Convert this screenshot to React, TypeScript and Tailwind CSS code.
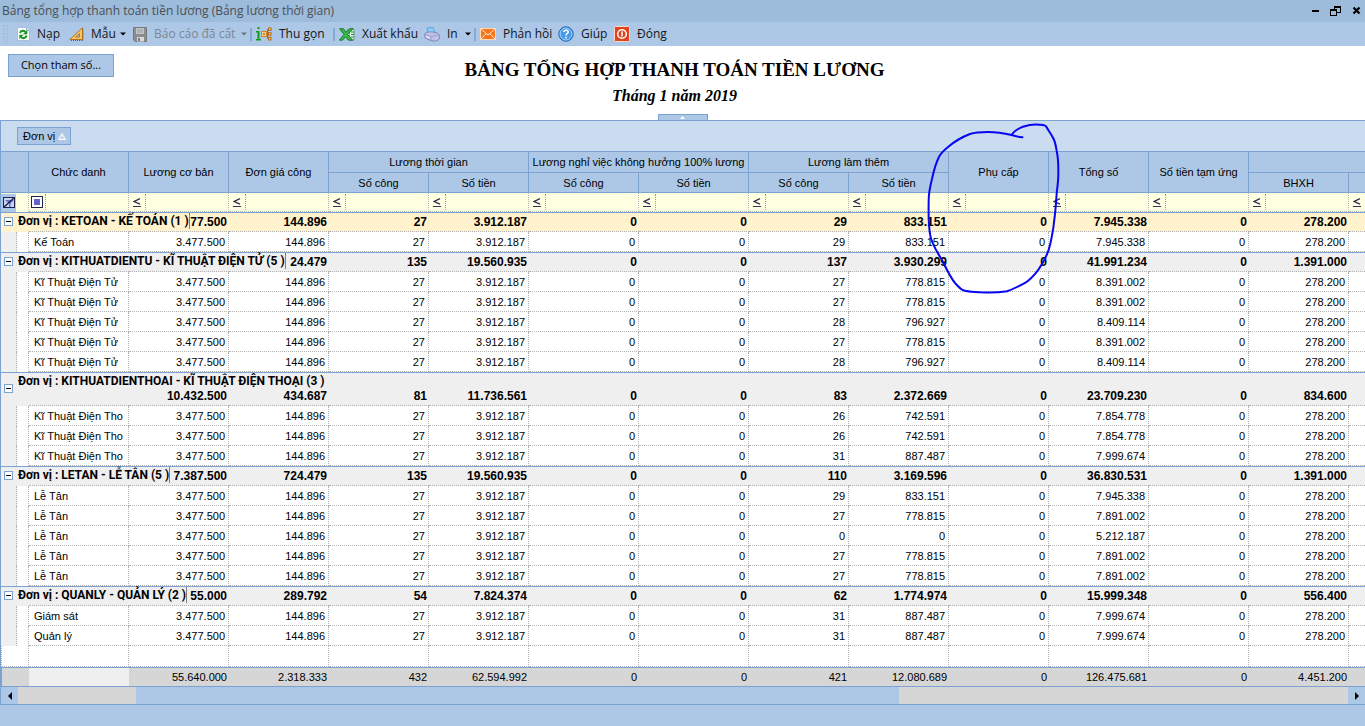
// Bảng tổng hợp thanh toán tiền lương — payroll summary grid
import { useState } from "react";
import type { ReactNode } from "react";

interface PayRow {
  title: string;
  values: string[];
}

interface PayGroup {
  id: string;
  label: string;
  totals: string[];
  rows: PayRow[];
  selected?: boolean;
  tall?: boolean;
}

const LEAF_COLUMNS = [
  "Lương cơ bản",
  "Đơn giá công",
  "Lương thời gian - Số công",
  "Lương thời gian - Số tiền",
  "Nghỉ việc - Số công",
  "Nghỉ việc - Số tiền",
  "Lương làm thêm - Số công",
  "Lương làm thêm - Số tiền",
  "Phụ cấp",
  "Tổng số",
  "Số tiền tạm ứng",
  "BHXH",
  "BHYT",
];

function row(title: string, otDays: string, otPay: string, total: string): PayRow {
  return {
    title,
    values: ["3.477.500", "144.896", "27", "3.912.187", "0", "0", otDays, otPay, "0", total, "0", "278.200", ""],
  };
}

// the group label runs over the first totals, so only their visible digits are kept
const GROUPS: PayGroup[] = [
  {
    id: "KETOAN",
    label: "Đơn vị : KETOAN - KẾ TOÁN (1 )",
    selected: true,
    totals: ["77.500", "144.896", "27", "3.912.187", "0", "0", "29", "833.151", "0", "7.945.338", "0", "278.200", ""],
    rows: [row("Kế Toán", "29", "833.151", "7.945.338")],
  },
  {
    id: "KITHUATDIENTU",
    label: "Đơn vị : KITHUATDIENTU - KĨ THUẬT ĐIỆN TỬ (5 )",
    totals: ["", "24.479", "135", "19.560.935", "0", "0", "137", "3.930.299", "0", "41.991.234", "0", "1.391.000", ""],
    rows: [
      row("Kĩ Thuật Điện Tử", "27", "778.815", "8.391.002"),
      row("Kĩ Thuật Điện Tử", "27", "778.815", "8.391.002"),
      row("Kĩ Thuật Điện Tử", "28", "796.927", "8.409.114"),
      row("Kĩ Thuật Điện Tử", "27", "778.815", "8.391.002"),
      row("Kĩ Thuật Điện Tử", "28", "796.927", "8.409.114"),
    ],
  },
  {
    id: "KITHUATDIENTHOAI",
    label: "Đơn vị : KITHUATDIENTHOAI - KĨ THUẬT ĐIỆN THOẠI (3 )",
    tall: true,
    totals: ["10.432.500", "434.687", "81", "11.736.561", "0", "0", "83", "2.372.669", "0", "23.709.230", "0", "834.600", ""],
    rows: [
      row("Kĩ Thuật Điện Tho", "26", "742.591", "7.854.778"),
      row("Kĩ Thuật Điện Tho", "26", "742.591", "7.854.778"),
      row("Kĩ Thuật Điện Tho", "31", "887.487", "7.999.674"),
    ],
  },
  {
    id: "LETAN",
    label: "Đơn vị : LETAN - LỄ TÂN (5 )",
    totals: ["7.387.500", "724.479", "135", "19.560.935", "0", "0", "110", "3.169.596", "0", "36.830.531", "0", "1.391.000", ""],
    rows: [
      row("Lễ Tân", "29", "833.151", "7.945.338"),
      row("Lễ Tân", "27", "778.815", "7.891.002"),
      row("Lễ Tân", "0", "0", "5.212.187"),
      row("Lễ Tân", "27", "778.815", "7.891.002"),
      row("Lễ Tân", "27", "778.815", "7.891.002"),
    ],
  },
  {
    id: "QUANLY",
    label: "Đơn vị : QUANLY - QUẢN LÝ (2 )",
    totals: ["55.000", "289.792", "54", "7.824.374", "0", "0", "62", "1.774.974", "0", "15.999.348", "0", "556.400", ""],
    rows: [
      row("Giám sát", "31", "887.487", "7.999.674"),
      row("Quản lý", "31", "887.487", "7.999.674"),
    ],
  },
];

const GRAND_TOTALS = ["55.640.000", "2.318.333", "432", "62.594.992", "0", "0", "421", "12.080.689", "0", "126.475.681", "0", "4.451.200", ""];

export default function App() {
  const [closed, setClosed] = useState<string[]>([]);

  function toggle(id: string) {
    setClosed(closed.includes(id) ? closed.filter((c) => c !== id) : [...closed, id]);
  }

  return (
    <div className="relative min-h-screen overflow-hidden bg-[#adc8e6] font-['Liberation_Sans',sans-serif] text-[11px] text-black">
      <TitleBar />
      <Toolbar />

      <header className="grid grid-cols-[106px_1fr_106px] bg-white pl-2 pr-6 pt-2">
        <button className="h-[23px] border border-[#7ba2d1] bg-[#adc8e6] font-['Open_Sans','Noto_Sans',sans-serif] text-[11px]">
          Chọn tham số...
        </button>
        <div className="pb-1 text-center font-['Liberation_Serif',serif] font-bold">
          <h1 className="pt-0.5 text-[19px] leading-7">BẢNG TỔNG HỢP THANH TOÁN TIỀN LƯƠNG</h1>
          <p className="text-base leading-6 italic">Tháng 1 năm 2019</p>
        </div>
      </header>
      <div className="flex justify-center bg-white pt-0.5">
        <button aria-label="Thu gọn tiêu đề" className="flex h-1.5 w-[50px] items-center justify-center border border-b-0 border-[#7ba2d1] bg-[#adc8e6]">
          <svg width="5" height="3" viewBox="0 0 5 3"><path d="M2.5 0 5 3H0z" fill="#fff" /></svg>
        </button>
      </div>

      <main className="overflow-hidden border-y border-l border-[#7ba2d1]">
        <div className="flex h-[30px] items-center bg-[#cbdbf0] pl-4">
          <button className="flex h-[18px] items-center gap-[3px] border border-[#7ba2d1] bg-[#adc8e6] pl-[5px] pr-1">
            Đơn vị
            <svg width="8" height="7" viewBox="0 0 8 7"><path d="M4 .5 7.5 6.5H.5z" fill="#c5d8ee" stroke="#fff" /></svg>
          </button>
        </div>

        <table className="w-full min-w-[1448px] table-fixed border-separate border-spacing-0 bg-white leading-[18px]">
          <colgroup>
            <col className="w-7" />
            <col className="w-[100px]" />
            {LEAF_COLUMNS.map((c) => (
              <col key={c} className={c.startsWith("Nghỉ việc") ? "w-[110px]" : "w-[100px]"} />
            ))}
          </colgroup>
          <thead>
            <tr className="h-[21px]">
              <Head rowSpan={2} />
              <Head rowSpan={2}>Chức danh</Head>
              <Head rowSpan={2}>Lương cơ bản</Head>
              <Head rowSpan={2}>Đơn giá công</Head>
              <Head colSpan={2}>Lương thời gian</Head>
              <Head colSpan={2}>Lương nghỉ việc không hưởng 100% lương</Head>
              <Head colSpan={2}>Lương làm thêm</Head>
              <Head rowSpan={2}>Phụ cấp</Head>
              <Head rowSpan={2}>Tổng số</Head>
              <Head rowSpan={2}>Số tiền tạm ứng</Head>
              <Head colSpan={2} />
            </tr>
            <tr className="h-5">
              <Head>Số công</Head>
              <Head>Số tiền</Head>
              <Head>Số công</Head>
              <Head>Số tiền</Head>
              <Head>Số công</Head>
              <Head>Số tiền</Head>
              <Head>BHXH</Head>
              <Head />
            </tr>
            <FilterRow />
          </thead>
          <tbody>
            {GROUPS.map((g) => (
              <GroupRows key={g.id} group={g} open={!closed.includes(g.id)} onToggle={() => toggle(g.id)} />
            ))}
            <tr className="h-[21px]">
              <td className="border-b border-l border-r border-dotted border-[#b4b4b4]" />
              <td className="border-b border-r border-dotted border-[#b4b4b4]" />
              {LEAF_COLUMNS.map((c) => <td key={c} className="border-b border-r border-dotted border-[#b4b4b4]" />)}
            </tr>
          </tbody>
          <tfoot>
            <tr className="h-[19px] bg-[#d6d6d6]">
              <td className="border-l border-t border-[#7ba2d1] p-0" />
              <td className="border-t border-[#7ba2d1] bg-[#efefef] p-0" />
              {GRAND_TOTALS.map((v, i) => (
                <td key={i} className="border-t border-[#7ba2d1] p-0 pr-0.5 text-right">{v}</td>
              ))}
            </tr>
          </tfoot>
        </table>

        <div className="flex h-[18px] border-t border-[#7ba2d1] bg-[#d6d6d6]">
          <button aria-label="Cuộn trái" className="flex w-[17px] items-center justify-center bg-[#adc8e6]">
            <svg width="4" height="8" viewBox="0 0 4 8"><path d="M4 0v8L0 4z" /></svg>
          </button>
          <div className="flex-[118]" />
          <div className="flex-[763] bg-[#adc8e6]" />
          <div className="flex-[449]" />
          <button aria-label="Cuộn phải" className="flex w-[17px] items-center justify-center bg-[#adc8e6]">
            <svg width="4" height="8" viewBox="0 0 4 8"><path d="M0 0v8l4-4z" /></svg>
          </button>
        </div>
      </main>

      <PenCircle />
    </div>
  );
}

function TitleBar() {
  return (
    <div className="flex h-[22px] items-center justify-between bg-[#9dbbda] pl-0.5 pr-1">
      <span className="font-['Open_Sans','Noto_Sans',sans-serif] text-[12px] text-[#4a4f57]">
        Bảng tổng hợp thanh toán tiền lương (Bảng lương thời gian)
      </span>
      <div className="flex items-center gap-2.5">
        <button aria-label="Thu nhỏ">
          <svg width="9" height="10" viewBox="0 0 9 10"><path d="M1 4h7v2H1z" /></svg>
        </button>
        <button aria-label="Khôi phục">
          <svg width="12" height="10" viewBox="0 0 12 10" shapeRendering="crispEdges">
            <path d="M4 0h7v2H4zM4 2h1v1H4zM10 2h1v5H10zM7 6h3v1H7z" />
            <path d="M0 3h7v2H0zM0 5h1v5H0zM6 5h1v5H6zM1 9h5v1H1z" />
          </svg>
        </button>
        <button aria-label="Đóng cửa sổ">
          <svg width="9" height="10" viewBox="0 0 9 10"><path d="M1.500 1.500 7.500 7.500M7.500 1.500 1.500 7.500" stroke="#000" strokeWidth="2.200" /></svg>
        </button>
      </div>
    </div>
  );
}

function Toolbar() {
  return (
    <nav className="flex h-6 items-center whitespace-nowrap bg-[#adc8e6] pl-[3px] font-['Open_Sans','Noto_Sans',sans-serif] text-[12px] text-[#141420]">
      <svg width="5" height="20" viewBox="0 0 5 20" fill="#8fa9c9">
        {[1, 5, 9, 13, 17].map((y) => (
          <g key={y}>
            <path d={`M0 ${y}h1v1H0zM3 ${y}h1v1H3z`} />
            <path d={`M1 ${y + 2}h1v1H1zM4 ${y + 2}h1v1H4z`} fill="#9db6d4" />
          </g>
        ))}
      </svg>
      <ToolButton className="w-[57px]" icon={<ReloadIcon />} label="Nạp" />
      <ToolButton className="w-[64px]" icon={<RulerIcon />} label="Mẫu" menu />
      <ToolButton className="w-[121px] text-[#7d8794]" icon={<SaveIcon />} label="Báo cáo đã cất" menu disabled />
      <Separator />
      <ToolButton className="w-[81px]" icon={<TreeIcon />} label="Thu gọn" />
      <Separator />
      <ToolButton className="w-[85px]" icon={<ExcelIcon />} label="Xuất khẩu" />
      <ToolButton className="w-[54px]" icon={<PrinterIcon />} label="In" menu />
      <Separator />
      <ToolButton className="w-[78px]" icon={<MailIcon />} label="Phản hồi" />
      <ToolButton className="w-[56px]" icon={<HelpIcon />} label="Giúp" />
      <ToolButton className="w-[60px]" icon={<PowerIcon />} label="Đóng" />
    </nav>
  );
}

function Separator() {
  return <span className="h-[13px] w-0.5 bg-[#86aad6]" />;
}

function ToolButton({
  icon,
  label,
  menu,
  disabled,
  className,
}: {
  icon: ReactNode;
  label: string;
  menu?: boolean;
  disabled?: boolean;
  className: string;
}) {
  return (
    <button disabled={disabled} className={`flex h-6 shrink-0 items-center pl-1 ${className}`}>
      {icon}
      <span className="pl-[7px]">{label}</span>
      {menu && (
        <svg className="ml-auto mr-[3px]" width="6" height="4" viewBox="0 0 6 4">
          <path d="M0 .5h6L3 3.500z" fill={disabled ? "#6b7480" : "#000"} />
        </svg>
      )}
    </button>
  );
}

function Head({ children, rowSpan, colSpan }: { children?: ReactNode; rowSpan?: number; colSpan?: number }) {
  return (
    <th
      rowSpan={rowSpan}
      colSpan={colSpan}
      className="whitespace-nowrap border-r border-t border-[#7ba2d1] bg-[#adc8e6] p-0 text-center align-middle font-normal"
    >
      {children}
    </th>
  );
}

function FilterRow() {
  return (
    <tr className="h-5 bg-[#ffffe1]">
      <td className="border-r border-t border-[#7ba2d1] border-r-[#b4b4b4] p-0 [border-right-style:dotted]">
        <button aria-label="Xóa bộ lọc" className="flex h-[18px] w-[15px] items-center bg-[#adc8e6] pl-0.5">
          <svg width="13" height="13" viewBox="0 0 13 13">
            <rect x=".5" y="1.500" width="11" height="10" fill="#c9d6f2" stroke="#22224e" />
            <path d="M2 4h9L7.500 7.500V11H6V7.500z" fill="#6b74c8" />
            <path d="M1 11 11.500 1.500" stroke="#22224e" strokeWidth="1.500" />
          </svg>
        </button>
      </td>
      <td className="border-b border-r border-t border-dotted border-[#b4b4b4] border-t-[#7ba2d1] p-0 [border-top-style:solid]">
        <FilterCell label="Chức danh">
          <svg width="12" height="12" viewBox="0 0 12 12" shapeRendering="crispEdges">
            <rect x=".5" y=".5" width="11" height="11" fill="#fff" stroke="#22224e" />
            <rect x="3" y="3" width="6" height="6" fill="#6464cd" />
          </svg>
        </FilterCell>
      </td>
      {LEAF_COLUMNS.map((c) => (
        <td key={c} className="border-b border-r border-t border-dotted border-[#b4b4b4] border-t-[#7ba2d1] p-0 [border-top-style:solid]">
          <FilterCell label={c}>
            <svg width="8" height="9" viewBox="0 0 8 9" fill="none" stroke="#30305c">
              <path d="M7 .7 1.200 3.500 7 6.200" strokeWidth="1.300" />
              <path d="M0 8.500h8" />
            </svg>
          </FilterCell>
        </td>
      ))}
    </tr>
  );
}

function FilterCell({ label, children }: { label: string; children: ReactNode }) {
  return (
    <div className="flex h-[18px] items-center">
      <button aria-label={`Điều kiện lọc ${label}`} className="flex h-4 w-[17px] items-center justify-center border-r border-dotted border-[#9a9a9a]">
        {children}
      </button>
      <input aria-label={`Lọc ${label}`} className="h-4 w-full min-w-0 flex-1 bg-transparent px-1 outline-none" />
    </div>
  );
}

function GroupRows({ group, open, onToggle }: { group: PayGroup; open: boolean; onToggle: () => void }) {
  const bg = group.selected ? "bg-[#fff2cc]" : "bg-[#efefef]";
  const line = "border-b border-t border-dotted border-[#b4b4b4] border-t-[#7ba2d1] [border-top-style:solid]";
  return (
    <>
      <tr className={`${group.tall ? "h-[34px]" : "h-5"} ${bg} text-[12px] font-bold`}>
        <td className={`relative border-t border-[#7ba2d1] p-0 pb-0.5 ${bg}`}>
          <button
            aria-label={group.label}
            aria-expanded={open}
            onClick={onToggle}
            className="ml-[3px] flex size-[9px] items-center justify-center border border-[#7ba2d1] bg-white"
          >
            <svg width="5" height="5" viewBox="0 0 5 5" shapeRendering="crispEdges">
              <path d={open ? "M0 2h5v1H0z" : "M0 2h5v1H0zM2 0h1v5H2z"} />
            </svg>
          </button>
          <span className={`absolute left-[17px] top-0 z-10 h-4 whitespace-nowrap font-['Roboto','Liberation_Sans',sans-serif] leading-4 ${bg} ${group.tall ? "" : "border-r border-[#808080]"}`}>
            {group.label}
          </span>
        </td>
        <td className={`p-0 ${line}`} />
        {group.totals.map((v, i) => (
          <td key={i} className={`p-0 pr-0.5 text-right align-bottom ${line}`}>{v}</td>
        ))}
      </tr>
      {open && group.rows.map((r, i) => (
        <tr key={i} className="h-5">
          <td className="border-r border-dotted border-[#b4b4b4] p-0">
            <div className="h-5 w-4 border-r border-dotted border-[#b4b4b4] bg-[#efefef]" />
          </td>
          <td className="whitespace-nowrap border-b border-r border-dotted border-[#b4b4b4] p-0 pl-[5px]">{r.title}</td>
          {r.values.map((v, j) => (
            <td key={j} className="border-b border-r border-dotted border-[#b4b4b4] p-0 pr-[3px] text-right">{v}</td>
          ))}
        </tr>
      ))}
    </>
  );
}

// Hand-drawn pen mark round the "Phụ cấp" column
function PenCircle() {
  return (
    <svg className="pointer-events-none absolute left-[920px] top-[120px] z-20" width="145" height="180" viewBox="920 120 145 180" fill="none">
      <path
        d="M1022.500 137.300C1018 137 1015 136 1011.700 135C1003 133 996 132 988 132C981 132 976 132 970 134C962 137 955 141 948 147C943 151 940 154 938.500 158C935 165 933.500 172 932 179C930 187 928.700 192 928.700 200C928.400 212 928.500 224 930 234C931 243 937 252 942 260C946 268 950 277 955 283C959 287 961 290 964 290.500C969 292 975 291.700 981 292.300C990 292.700 999 292.500 1007 291.300C1014 289 1021 285 1027 281.700C1033 277 1038 271 1042 264C1047 256 1049 250 1050.500 243C1052 235 1053.500 229 1054 222C1055.500 212 1056 203 1056.700 193C1057.500 186 1058.500 180 1058.300 173C1058.500 164 1058 157 1056.700 151C1055.500 144 1055 140 1052.500 137C1050 132 1048 130 1046.500 127C1045.500 125 1043 125 1040 124.700C1034 124 1028 125 1023 126.700C1018 129 1013 131 1012 135"
        stroke="#0606f0"
        strokeWidth="2"
        strokeLinecap="round"
      />
    </svg>
  );
}

function ReloadIcon() {
  return (
    <svg className="ml-[5px]" width="13" height="14" viewBox="0 0 13 14">
      <path d="M.5.5h9l3 3v10H.5z" fill="#fff" stroke="#a9bdd8" />
      <path d="M9.500.5v3h3" fill="#dce6f2" stroke="#9db3d0" />
      <path d="M3 6C3.500 3.500 7 3 8.500 5M9.500 8.500C9 11.500 5.500 12 4 10" fill="none" stroke="#10941c" strokeWidth="2" />
      <path d="M10.300 3v4.300H6zM2.300 12V7.700h4.300z" fill="#10941c" />
    </svg>
  );
}

function RulerIcon() {
  return (
    <svg width="15" height="14" viewBox="0 0 15 14">
      <path d="M13.500.8V12.500H.8z" fill="#f6c765" stroke="#b9731e" />
      <path d="M10.500 6.500V10H6.500z" fill="#adc8e6" stroke="#b9731e" />
      <path d="M2 13.500h12v-12" fill="none" stroke="#8c5518" strokeDasharray="1 1" />
    </svg>
  );
}

function SaveIcon() {
  return (
    <svg width="14" height="15" viewBox="0 0 14 15">
      <path d="M.5.5h13v14H2l-1.500-1.500z" fill="#8b8d90" stroke="#77797c" />
      <path d="M3 1h8v6H3z" fill="#c4c6c9" />
      <path d="M4 3h6M4 5h6" stroke="#9b9da0" />
      <path d="M4 10h7v4.500H4z" fill="#d8dadc" />
      <path d="M5 11h2v3H5z" fill="#77797c" />
    </svg>
  );
}

function TreeIcon() {
  return (
    <svg width="16" height="14" viewBox="0 0 16 14" fill="none">
      <path d="M1.500 0h2v2h-2zM0 4h3.500v8H5v1.500H0V12h1.500V5.500H0z" fill="#159a1e" />
      <path d="M10 7h4M11.500 2.500v9M11.500 2.500H13M11.500 11.500H13" stroke="#b4661c" />
      <rect x="5.500" y="4.500" width="5" height="5" fill="#ffe9a8" stroke="#d5801f" />
      <path d="M8 5.500v3M6.500 7h3" stroke="#b4661c" />
      <rect x="12.500" y="1" width="2.500" height="2.500" fill="#ffd37a" stroke="#b4661c" />
      <rect x="12.500" y="5.700" width="2.500" height="2.500" fill="#ffd37a" stroke="#b4661c" />
      <rect x="12.500" y="10.400" width="2.500" height="2.500" fill="#ffd37a" stroke="#b4661c" />
    </svg>
  );
}

function ExcelIcon() {
  return (
    <svg width="16" height="13" viewBox="0 0 16 13">
      <path d="M8 2h7M9 5h6M9 8h6M8 11h7" stroke="#3c8f46" />
      <path d="M11 1h4v11h-4" fill="#dcefdc" stroke="#3c8f46" strokeWidth=".7" />
      <path d="M12 4h3M12 6.500h3M12 9h3" stroke="#3c8f46" />
      <path d="M.5.7h4l2.500 3.500L10.500.7H14L8.700 6.500l5 5.700h-4L6.500 9l-3 3.200H.3L5 6.500z" fill="#39b54a" stroke="#0d6b1c" strokeWidth=".8" />
    </svg>
  );
}

function PrinterIcon() {
  return (
    <svg width="16" height="15" viewBox="0 0 16 15">
      <path d="M3 1 9 .5 11 6 4 7z" fill="#8fd0f6" stroke="#4c9bd4" strokeWidth=".8" />
      <path d="M.7 7C2 4.500 8 4.500 11 5.500c3 .5 4.500 2 4.300 3.500v3c-1 2-6 2.500-8.500 1.500L1 11z" fill="#c0c0e8" stroke="#7777b0" strokeWidth=".8" />
      <path d="M1 7.500 7 9.500l8-1.500M7 9.500v4" fill="none" stroke="#9696cc" strokeWidth=".8" />
      <path d="M2 9.500 5.500 11" stroke="#fff" />
    </svg>
  );
}

function MailIcon() {
  return (
    <svg width="16" height="12" viewBox="0 0 16 12" fill="none">
      <rect x=".5" y=".5" width="15" height="11" fill="#f5761a" stroke="#ffd9b5" />
      <path d="M1 1l7 6 7-6M1 11l5-5.500M15 11l-5-5.500" stroke="#ffe8d2" />
    </svg>
  );
}

function HelpIcon() {
  return (
    <svg width="16" height="16" viewBox="0 0 16 16" fill="none">
      <circle cx="8" cy="8" r="7.200" fill="#4a9aea" stroke="#1f5fae" />
      <circle cx="8" cy="8" r="6" stroke="#a9d3fa" />
      <path d="M5.800 6C6 3.500 10.300 3.500 10.300 6 10.300 7.500 8 7.500 8 9.500" stroke="#fff" strokeWidth="1.500" />
      <path d="M7.200 10.700h1.600v1.500H7.200z" fill="#fff" />
    </svg>
  );
}

function PowerIcon() {
  return (
    <svg width="16" height="16" viewBox="0 0 16 16" fill="none">
      <rect x=".5" y=".5" width="15" height="15" rx="1" fill="#e0441f" stroke="#fbd8cc" />
      <circle cx="8" cy="8" r="4.300" stroke="#fff" strokeWidth="1.500" />
      <path d="M8 5.500v5" stroke="#fff" strokeWidth="1.500" />
    </svg>
  );
}
